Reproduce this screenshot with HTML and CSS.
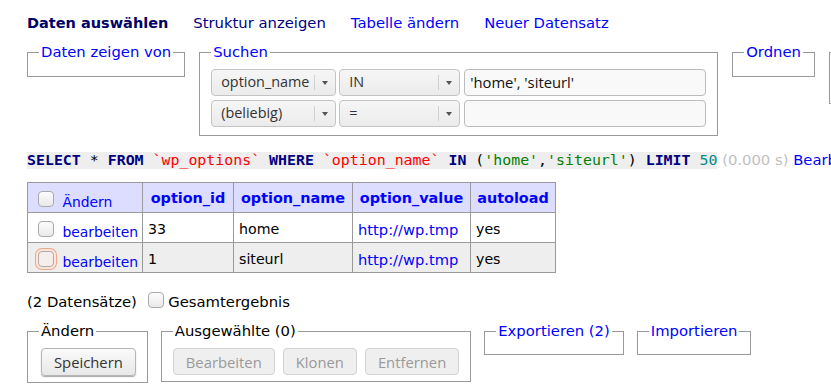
FILE: index.html
```html
<!DOCTYPE html>
<html lang="de">
<head>
<meta charset="utf-8">
<title>Daten auswählen: wp_options</title>
<link rel="stylesheet" href="styles.css">
</head>
<body>
<div class="content">
  <p class="links">
    <a class="current">Daten auswählen</a>
    <a class="visited">Struktur anzeigen</a>
    <a>Tabelle ändern</a>
    <a>Neuer Datensatz</a>
  </p>

  <div class="filters">
    <fieldset class="fs"><legend><a>Daten zeigen von</a></legend></fieldset>
    <fieldset class="fs search"><legend><a>Suchen</a></legend>
      <div class="srow">
        <div class="sel w1"><span class="val">option_name</span><span class="sep"></span><span class="arr"></span></div>
        <div class="sel w2"><span class="val">IN</span><span class="sep"></span><span class="arr"></span></div>
        <div class="inp">'home', 'siteurl'</div>
      </div>
      <div class="srow">
        <div class="sel w1"><span class="val">(beliebig)</span><span class="sep"></span><span class="arr"></span></div>
        <div class="sel w2"><span class="val">=</span><span class="sep"></span><span class="arr"></span></div>
        <div class="inp"></div>
      </div>
    </fieldset>
    <fieldset class="fs"><legend><a>Ordnen</a></legend></fieldset>
    <fieldset class="fs"><legend>&nbsp;</legend><div class="inp small"></div></fieldset>
  </div>

  <p class="sqlline"><code class="sql"><b>SELECT</b> * <b>FROM</b> <span class="bac">`wp_options`</span> <b>WHERE</b> <span class="bac">`option_name`</span> <b>IN</b> (<span class="apo">'home'</span>,<span class="apo">'siteurl'</span>) <b>LIMIT</b> <span class="num">50</span></code> <span class="time">(0.000 s)</span> <a>Bearbeiten</a></p>

  <table class="data">
    <colgroup>
      <col class="c0"><col class="c1"><col class="c2"><col class="c3"><col class="c4">
    </colgroup>
    <thead>
      <tr>
        <td class="chk"><span class="cb"></span> <a>Ändern</a></td>
        <th><a>option_id</a></th>
        <th><a>option_name</a></th>
        <th><a>option_value</a></th>
        <th><a>autoload</a></th>
      </tr>
    </thead>
    <tbody>
      <tr>
        <td class="chk"><span class="cb"></span> <a>bearbeiten</a></td>
        <td>33</td>
        <td>home</td>
        <td><a class="url">http://wp.tmp</a></td>
        <td>yes</td>
      </tr>
      <tr class="odd">
        <td class="chk"><span class="cb focus"></span> <a>bearbeiten</a></td>
        <td>1</td>
        <td>siteurl</td>
        <td><a class="url">http://wp.tmp</a></td>
        <td>yes</td>
      </tr>
    </tbody>
  </table>

  <p class="count">(2 Datensätze) <span class="cb"></span> Gesamtergebnis</p>

  <div class="actions">
    <fieldset class="fs act first"><legend>Ändern</legend>
      <div class="btns"><span class="btn">Speichern</span></div>
    </fieldset>
    <fieldset class="fs act"><legend>Ausgewählte (0)</legend>
      <div class="btns"><span class="btn dis">Bearbeiten</span><span class="btn dis">Klonen</span><span class="btn dis">Entfernen</span></div>
    </fieldset>
    <fieldset class="fs"><legend><a>Exportieren (2)</a></legend></fieldset>
    <fieldset class="fs"><legend><a>Importieren</a></legend></fieldset>
  </div>
</div>
</body>
</html>
```

FILE: styles.css
```css
html, body {
  margin: 0;
  padding: 0;
  background: #fff;
  overflow: hidden;
}
body {
  color: #000;
  font: 14.8px/1.25 "DejaVu Sans", Verdana, sans-serif;
}
a {
  color: #00f;
  text-decoration: none;
}
.content {
  padding-left: 27px;
  width: 1000px;
}
.links {
  margin: 14px 0 0;
  display: flex;
  gap: 25px;
}
.links .current {
  color: #000066;
  font-weight: bold;
  font-size: 14.5px;
}
.links .visited {
  color: #000080;
}
.filters, .actions {
  display: flex;
  align-items: flex-start;
  gap: 14px;
}
.actions {
  gap: 13px;
}
.filters {
  margin-top: 11px;
}
.fs {
  margin: 0;
  padding: 7px 11px 7px 11px;
  border: 1px solid #999;
  min-width: 0;
}
.fs legend {
  padding: 0 2px;
}
.search {
  padding-top: 7px;
  padding-bottom: 8px;
}
.srow {
  display: flex;
  gap: 3px;
  margin-bottom: 4px;
}
.srow:last-child {
  margin-bottom: 0;
}
.sel, .inp, .btn {
  font-family: "Open Sans", "DejaVu Sans", sans-serif;
  font-size: 14.8px;
}
.sel {
  box-sizing: border-box;
  height: 27px;
  border: 1px solid #c4c4c4;
  border-radius: 4px;
  background: linear-gradient(#f6f6f6, #ebebeb);
  display: flex;
  align-items: center;
  color: #333;
  padding-left: 9px;
  font-size: 14.4px;
}
.sel .val {
  flex: 1;
}
.sel .sep {
  width: 1px;
  height: 15px;
  background: #d0d0d0;
}
.sel .arr {
  width: 20px;
  height: 25px;
  position: relative;
}
.sel .arr::after {
  content: "";
  position: absolute;
  left: 7px;
  top: 11px;
  border-left: 3px solid transparent;
  border-right: 3px solid transparent;
  border-top: 4px solid #555;
}
.w1 { width: 125px; }
.w2 { width: 121px; }
.inp {
  box-sizing: border-box;
  width: 242px;
  height: 27px;
  margin-left: 1px;
  border: 1px solid #bcbcbc;
  border-radius: 4px;
  background: #f9f9f9;
  padding: 2px 5px 0;
  color: #111;
  line-height: 20px;
}
.inp.small {
  width: 60px;
}
.sqlline {
  margin: 15px 0 0;
  white-space: nowrap;
}
.sql {
  font: 14.9px/17px "DejaVu Sans Mono", monospace;
  background: #eee;
  color: #000;
  display: inline-block;
}
.sql b {
  color: #000080;
}
.sql .bac { color: #f00; }
.sql .apo { color: #008000; }
.sql .num { color: #008b8b; }
.time {
  color: #c0c0c0;
}
.data {
  margin-top: 13px;
  border-collapse: collapse;
  table-layout: fixed;
  width: 528px;
  font-size: 14.2px;
}
.data td, .data th {
  box-sizing: border-box;
  border: 1px solid #999;
  padding: 4px 5px 0;
  height: 30px;
  text-align: left;
  font-weight: normal;
  white-space: nowrap;
  overflow: hidden;
  vertical-align: middle;
}
.data thead td, .data thead th {
  background: #ddf;
}
.data thead th {
  text-align: center;
  font-weight: bold;
  font-size: 14.4px;
  padding: 0 4px;
}
.data .url {
  font-size: 14.7px;
}
.data .chk {
  padding-top: 0;
  font-size: 13.9px;
}
.data .odd td {
  background: #eee;
}
.c0 { width: 115px; }
.c1 { width: 91px; }
.c2 { width: 119px; }
.c3 { width: 118px; }
.c4 { width: 85px; }
.cb {
  display: inline-block;
  box-sizing: border-box;
  width: 16px;
  height: 16px;
  border: 1px solid #aaa;
  border-radius: 4px;
  background: linear-gradient(#fdfdfd, #e9e9e9);
  vertical-align: -1px;
  margin-left: 5px;
  margin-right: 3px;
}
.data .cb {
  vertical-align: baseline;
  margin: 6px 4px 0 5px;
}
.cb.focus {
  border-color: #b9a8a4;
  box-shadow: 0 0 0 2px #fbe6de, 0 0 0 3px #eea88c;
  background: #f6eeec;
}
.count {
  margin: 19px 0 0;
}
.count .cb {
  margin-left: 6px;
  margin-right: 0;
}
.actions {
  margin-top: 10px;
}
.act {
  padding-top: 8px;
  padding-bottom: 6px;
}
.btns {
  display: flex;
  gap: 8px;
}
.first .btns {
  padding-left: 2px;
}
.btn {
  box-sizing: border-box;
  height: 28px;
  padding: 0 12px;
  display: flex;
  align-items: center;
  border: 1px solid #b5b5b5;
  border-radius: 4px;
  background: linear-gradient(#fafafa, #e8e8e8);
  box-shadow: 0 1px 1px rgba(0,0,0,0.35);
  color: #333;
}
.btn.dis {
  height: 27px;
  color: #9a9a9a;
  border-color: #d2d2d2;
  background: #efefef;
  box-shadow: none;
}
```
